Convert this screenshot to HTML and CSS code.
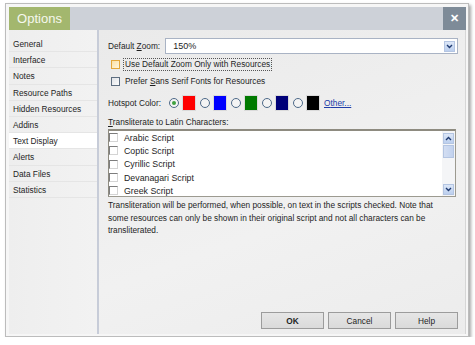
FILE: index.html
```html
<!DOCTYPE html>
<html lang="en">

<head>
	<title>Options</title>
	<meta charset="utf-8">
	<link rel="stylesheet" href="styles.css">
</head>

<body>
	<div class="dialog">
		<div class="titlebar">
			<div class="tab">Options</div>
			<div class="bar"></div>
			<div class="close">&#x2715;</div>
		</div>

		<div class="main">
			<ul class="nav">
				<li>General</li>
				<li>Interface</li>
				<li>Notes</li>
				<li>Resource Paths</li>
				<li>Hidden Resources</li>
				<li>Addins</li>
				<li class="selected">Text Display</li>
				<li>Alerts</li>
				<li>Data Files</li>
				<li>Statistics</li>
			</ul>

			<div class="panel">
				<div class="zoom-row">
					<span class="label">Default <u>Z</u>oom:</span>
					<div class="select">
						<span class="value">150%</span>
						<span class="drop"><svg width="7" height="5" viewBox="0 0 7 5"><path d="M1 1 L3.5 3.5 L6 1" fill="none" stroke="#1f3a70" stroke-width="1.4"/></svg></span>
					</div>
				</div>

				<label class="check focus"><span class="box hover"></span><span class="text">Use Default Zoom Only with Resources</span></label>
				<label class="check"><span class="box"></span><span class="text">Prefer <u>S</u>ans Serif Fonts for Resources</span></label>

				<div class="hotspot">
					<span class="label">Hotspot Color:</span>
					<span class="radio checked"></span><span class="swatch red"></span>
					<span class="radio"></span><span class="swatch blue"></span>
					<span class="radio"></span><span class="swatch green"></span>
					<span class="radio"></span><span class="swatch navy"></span>
					<span class="radio"></span><span class="swatch black"></span>
					<a class="other"><u>O</u>ther...</a>
				</div>

				<div class="trans-label"><u>T</u>ransliterate to Latin Characters:</div>
				<div class="listbox">
					<ul class="scripts">
						<li><span class="box"></span>Arabic Script</li>
						<li><span class="box"></span>Coptic Script</li>
						<li><span class="box"></span>Cyrillic Script</li>
						<li><span class="box"></span>Devanagari Script</li>
						<li><span class="box"></span>Greek Script</li>
					</ul>
					<div class="scrollbar">
						<span class="sbtn"><svg width="7" height="5" viewBox="0 0 7 5"><path d="M1 4 L3.5 1.5 L6 4" fill="none" stroke="#1f3a70" stroke-width="1.4"/></svg></span>
						<span class="thumb"></span>
						<span class="track"></span>
						<span class="sbtn"><svg width="7" height="5" viewBox="0 0 7 5"><path d="M1 1 L3.5 3.5 L6 1" fill="none" stroke="#1f3a70" stroke-width="1.4"/></svg></span>
					</div>
				</div>

				<p class="note">Transliteration will be performed, when possible, on text in the scripts checked. Note that some resources can only be shown in their original script and not all characters can be transliterated.</p>

				<div class="buttons">
					<button class="ok">OK</button>
					<button>Cancel</button>
					<button>Help</button>
				</div>
			</div>
		</div>
	</div>
</body>
</html>
```

FILE: styles.css
```css
* {
	margin: 0;
	padding: 0;
	box-sizing: border-box;
}

body {
	font-family: 'Liberation Sans', Arial, sans-serif;
	font-size: 8.3px;
	color: #1e1e1e;
	background: white;
}

.dialog {
	display: flex;
	flex-direction: column;
	margin: 3px 0 0 5px;
	width: 464px;
	height: 334px;
	padding: 3px 2px 2px 3px;
	border: 1px solid #bcbcbc;
	background: #f6f6f6;
	box-shadow: 2px 2px 3px rgba(0, 0, 0, 0.35);
}

.titlebar {
	display: flex;
	height: 23px;
	flex-shrink: 0;
}

.tab {
	width: 61px;
	background: #a3b76e;
	color: #f6f8ee;
	font-size: 13px;
	line-height: 23px;
	text-align: center;
}

.bar {
	flex: 1;
	background: #cdd1d8;
}

.close {
	width: 23px;
	background: #7e8b98;
	color: white;
	font-size: 11px;
	font-weight: bold;
	line-height: 23px;
	text-align: center;
}

.main {
	display: flex;
	flex: 1;
	min-height: 0;
}

.nav {
	list-style: none;
	width: 90px;
	padding-top: 6px;
	background: linear-gradient(to right, #eeeeee, #f2f2f2);
	border-right: 2px solid #c7ccd8;
}

.nav li {
	height: 16.2px;
	line-height: 16px;
	padding-left: 4px;
	border-bottom: 1px solid #e5e5e5;
}

.nav li.selected {
	background: white;
}

.panel {
	display: flex;
	flex-direction: column;
	flex: 1;
	padding: 8px 7px 5px 9px;
	background: linear-gradient(160deg, #eaeaea, #f1f1f1 60%, #ececec);
	border-right: 1px solid #d6d6d6;
}

.zoom-row {
	display: flex;
	align-items: center;
	height: 16px;
}

.label {
	margin-right: 5px;
}

.select {
	display: flex;
	align-items: center;
	flex: 1;
	height: 16px;
	padding: 0 2px 0 7px;
	background: white;
	border: 1px solid #a9b3c4;
	font-size: 9px;
}

.value {
	flex: 1;
}

.drop,
.sbtn {
	display: flex;
	align-items: center;
	justify-content: center;
	width: 11px;
	height: 11px;
	background: linear-gradient(#dce7f8, #bccfee);
	border: 1px solid #b4c5e2;
}

.check {
	display: flex;
	align-items: center;
	height: 12px;
	margin-top: 5px;
	padding-left: 3px;
}

.check.focus {
	margin-top: 4px;
}

.check .text {
	padding: 0 1px;
	line-height: 11px;
}

.check.focus .text {
	outline: 1px dotted #555;
}

.box {
	display: inline-block;
	width: 9px;
	height: 9px;
	margin-right: 4px;
	background: white;
	border: 1px solid;
	border-color: #7d7d7d #d4d4d4 #d4d4d4 #7d7d7d;
	flex-shrink: 0;
}

.check .box {
	border: 1px solid #5d6d80;
	background: linear-gradient(135deg, #e0e3e7, #fbfbfb);
}

.check .box.hover {
	border-color: #e4a83c;
	background: linear-gradient(135deg, #fbe2a8, #fff6dd);
}

.hotspot {
	display: flex;
	align-items: center;
	height: 16px;
	margin-top: 8px;
}

.hotspot .label {
	margin-right: 8px;
}

.radio {
	position: relative;
	width: 10px;
	height: 10px;
	margin-right: 3px;
	border: 1px solid #4d6988;
	border-radius: 50%;
	background: #f4f4f4;
}

.radio.checked::after {
	content: '';
	position: absolute;
	left: 2px;
	top: 2px;
	width: 4px;
	height: 4px;
	border-radius: 50%;
	background: #3fa13f;
}

.swatch {
	width: 14px;
	height: 16px;
	margin-right: 4px;
	border: 1px solid #dadada;
}

.red { background: #ff0000; }
.blue { background: #0000ff; }
.green { background: #007a00; }
.navy { background: #000078; }
.black { background: #000000; }

.other {
	color: #203ca8;
	text-decoration: underline;
	margin-left: 0;
}

.trans-label {
	margin-top: 6px;
	line-height: 10px;
}

.listbox {
	display: flex;
	height: 68px;
	margin-top: 2px;
	margin-right: 2px;
	background: white;
	border: 1px solid #9c9a90;
	border-top: 2px solid #8e8b80;
	border-left-color: #8e8b80;
}

.scripts {
	list-style: none;
	flex: 1;
}

.scripts li {
	display: flex;
	align-items: center;
	height: 13.3px;
	font-size: 8.8px;
}

.scripts .box {
	margin-right: 6px;
}

.scrollbar {
	display: flex;
	flex-direction: column;
	width: 13px;
	padding: 2px 1px 1px;
	background: #f4f5f7;
}

.scrollbar .thumb {
	height: 13px;
	margin-top: 1px;
	background: linear-gradient(to right, #d3def2, #c2d2ee);
	border: 1px solid #b4c5e2;
}

.scrollbar .track {
	flex: 1;
}

.note {
	margin-top: 2px;
	line-height: 12.5px;
	padding-right: 20px;
}

.buttons {
	display: flex;
	justify-content: flex-end;
	gap: 4px;
	margin-top: auto;
}

.buttons button {
	width: 63px;
	height: 17px;
	font-family: inherit;
	font-size: 8.3px;
	color: #1e1e1e;
	background: linear-gradient(#e6e6e6, #dadada);
	border: 1px solid #9c9c9c;
}

.buttons .ok {
	font-weight: bold;
}
```
